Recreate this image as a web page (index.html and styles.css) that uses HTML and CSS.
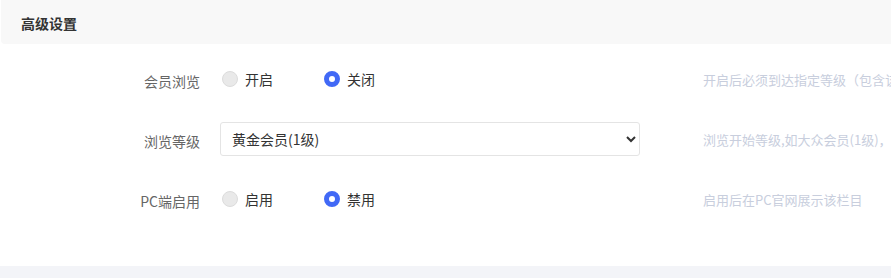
FILE: index.html
```html
<!DOCTYPE html>
<html lang="zh-CN">
<head>
    <meta charset="UTF-8">
    <meta name="viewport" content="width=device-width, initial-scale=1.0">
    <title>高级设置</title>
    <link rel="stylesheet" href="styles.css">
</head>
<body>
    <div class="panel">
        <div class="panel-header">高级设置</div>
        <form class="panel-body">
            <div class="form-row">
                <label class="form-label">会员浏览</label>
                <div class="form-control">
                    <label class="radio"><input type="radio" name="member-view"><span>开启</span></label>
                    <label class="radio"><input type="radio" name="member-view" checked><span>关闭</span></label>
                </div>
                <div class="form-help">开启后必须到达指定等级（包含该等级）才能浏览</div>
            </div>

            <div class="form-row">
                <label class="form-label" for="view-level">浏览等级</label>
                <div class="form-control">
                    <select id="view-level" class="select">
                        <option>黄金会员(1级)</option>
                        <option>大众会员(1级)</option>
                    </select>
                </div>
                <div class="form-help">浏览开始等级,如大众会员(1级)，则所有会员均可浏览</div>
            </div>

            <div class="form-row">
                <label class="form-label">PC端启用</label>
                <div class="form-control">
                    <label class="radio"><input type="radio" name="pc-enable"><span>启用</span></label>
                    <label class="radio"><input type="radio" name="pc-enable" checked><span>禁用</span></label>
                </div>
                <div class="form-help">启用后在PC官网展示该栏目</div>
            </div>
        </form>
    </div>
    <div class="page-footer"></div>
</body>
</html>
```

FILE: styles.css
```css
:root {
    --header-bg: #f8f8f8;
    --footer-bg: #f3f4f8;
    --text-color: #333333;
    --label-color: #666666;
    --help-color: #c8cedd;
    --border-color: #e4e4e4;
    --primary: #4169f6;
}

body {
    margin: 0;
    background: #ffffff;
    color: var(--text-color);
    font-family: "Noto Sans CJK SC", "Noto Sans", sans-serif;
    font-size: 14px;
    overflow: hidden;
}

.panel {
    background: #ffffff;
}

.panel-header {
    height: 44px;
    margin-left: 1px;
    padding: 2px 0 0 20px;
    box-sizing: border-box;
    line-height: 42px;
    background: var(--header-bg);
    border-radius: 0 0 0 4px;
    font-weight: bold;
    color: var(--text-color);
}

.panel-body {
    display: flex;
    flex-direction: column;
    gap: 26px;
    padding: 18px 0 50px;
    margin: 0;
}

.form-row {
    display: flex;
    align-items: center;
    height: 34px;
    white-space: nowrap;
}

.form-label {
    width: 200px;
    flex-shrink: 0;
    text-align: right;
    color: var(--label-color);
    padding-top: 4px;
}

.form-control {
    display: flex;
    align-items: center;
    width: 420px;
    flex-shrink: 0;
    margin-left: 20px;
}

/* the page is narrower than the help text, it is cut at the right edge */
.form-help {
    flex: 1;
    min-width: 0;
    overflow: hidden;
    margin-left: 63px;
    font-size: 13px;
    color: var(--help-color);
}

.radio {
    display: flex;
    align-items: center;
    margin-left: 2px;
    margin-right: 49px;
    cursor: pointer;
}

.radio input {
    appearance: none;
    width: 16px;
    height: 16px;
    margin: 0 7px 0 0;
    border: 1px solid #dcdcdc;
    border-radius: 50%;
    background: #e9e9e9;
}

.radio input:checked {
    border: 5px solid var(--primary);
    background: #ffffff;
}

.select {
    width: 420px;
    height: 34px;
    padding: 0 8px 0 7px;
    border: 1px solid var(--border-color);
    border-radius: 3px;
    background: #ffffff;
    color: var(--text-color);
    font-family: inherit;
    font-size: 14px;
}

.page-footer {
    height: 20px;
    background: var(--footer-bg);
}
```
